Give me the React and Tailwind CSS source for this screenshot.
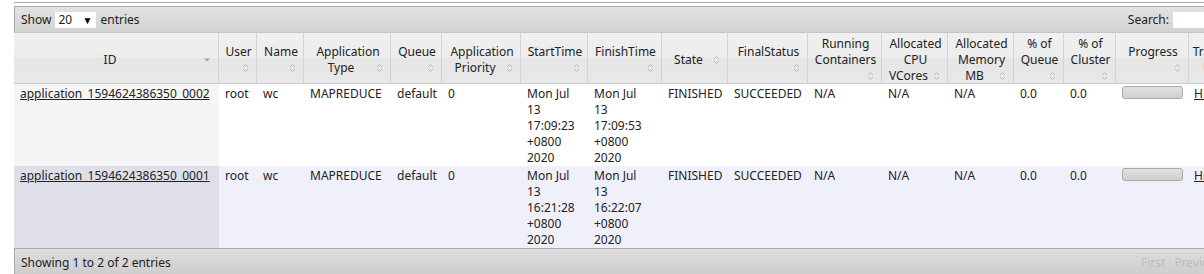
import React from "react";

const columns = [
  { label: "ID", w: "w-[205px]", sorted: true },
  { label: "User", w: "w-[38px]" },
  { label: "Name", w: "w-[47px]" },
  { label: "Application Type", w: "w-[87px]" },
  { label: "Queue", w: "w-[51px]" },
  { label: "Application Priority", w: "w-[79px]" },
  { label: "StartTime", w: "w-[67px]" },
  { label: "FinishTime", w: "w-[74px]" },
  { label: "State", w: "w-[66px]" },
  { label: "FinalStatus", w: "w-[80px]" },
  { label: "Running Containers", w: "w-[74px]" },
  { label: "Allocated CPU VCores", w: "w-[66px]" },
  { label: "Allocated Memory MB", w: "w-[66px]" },
  { label: "% of Queue", w: "w-[50px]" },
  { label: "% of Cluster", w: "w-[52px]" },
  { label: "Progress", w: "w-[73px]" },
  { label: "Tracking UI", w: "w-[60px]", last: true },
];

const apps = [
  {
    id: "application_1594624386350_0002",
    start: ["Mon Jul", "13", "17:09:23", "+0800", "2020"],
    finish: ["Mon Jul", "13", "17:09:53", "+0800", "2020"],
  },
  {
    id: "application_1594624386350_0001",
    start: ["Mon Jul", "13", "16:21:28", "+0800", "2020"],
    finish: ["Mon Jul", "13", "16:22:07", "+0800", "2020"],
  },
];

const SortIcon = ({ sorted }) => (
  <span className="float-right w-[14px] h-[16px] flex items-center justify-center">
    {sorted ? (
      <svg width="6" height="4" viewBox="0 0 6 4">
        <path d="M0 0.5 L6 0.5 L3 3.5 Z" fill="#a8a8a8" />
      </svg>
    ) : (
      <svg width="7" height="10" viewBox="0 0 7 10">
        <polyline points="1,4 3.5,1.5 6,4" fill="none" stroke="#b8b8b8" strokeWidth="1" />
        <polyline points="1,6 3.5,8.5 6,6" fill="none" stroke="#b8b8b8" strokeWidth="1" />
      </svg>
    )}
  </span>
);

const Lines = ({ items }) => (
  <>
    {items.map((t, i) => (
      <div key={i}>{t}</div>
    ))}
  </>
);

export default function App() {
  return (
    <div className="w-[1204px] h-[274px] overflow-hidden bg-white text-[12px] leading-[16px] text-[#222] font-['Noto_Sans',sans-serif]">
      <div className="h-[2px]" />
      <div className="ml-[14px] h-px bg-[#a9a9a9]" />
      <div className="h-[3px]" />

      <div className="ml-[14px] w-[1246px]">
        {/* toolbar */}
        <div className="h-[26px] border-t border-l border-[#aaa] bg-[linear-gradient(#e2e2e2,#d2d2d2)] flex items-center justify-between pl-[6px] pr-[6px]">
          <div className="flex items-center gap-[4px]">
            <span>Show</span>
            <span className="w-[41px] h-[16px] bg-white flex items-center justify-between pl-[3px] pr-[4px]">
              <span>20</span>
              <span className="text-[10px] text-black">▼</span>
            </span>
            <span>entries</span>
          </div>
          <div className="flex items-center gap-[4px]">
            <span>Search:</span>
            <span className="w-[81px] h-[16px] bg-white" />
          </div>
        </div>

        <table className="table-fixed w-[1235px] border-separate border-spacing-0">
          <colgroup>
            {columns.map((c) => (
              <col key={c.label} className={c.w} />
            ))}
          </colgroup>
          <thead>
            <tr>
              {columns.map((c) => (
                <th
                  key={c.label}
                  className={`h-[52px] font-normal text-center align-middle pr-[4px] py-0 border-t border-b border-r border-t-[#c4c4c4] border-b-[#c9c9c9] border-r-[#d3d3d3] bg-[linear-gradient(#f0f0f0_0%,#ececec_50%,#e6e6e6_51%,#e8e8e8_100%)] ${c.last ? "pl-0" : "pl-[6px]"}`}
                >
                  <div className="translate-y-[2px]">
                    {c.label}
                    <SortIcon sorted={c.sorted} />
                  </div>
                </th>
              ))}
            </tr>
          </thead>
          <tbody>
            {apps.map((a, i) => {
              const even = i % 2 === 1;
              const rowBg = even ? "bg-[#f0f0fb]" : "bg-white";
              const idBg = even ? "bg-[#dfdfe9]" : "bg-[#f5f5f5]";
              const td = `align-top pl-[6px] pr-[4px] pt-[2px] pb-0 h-[82px] ${rowBg}`;
              return (
                <tr key={a.id}>
                  <td className={`align-top pl-[6px] pr-0 pt-[2px] pb-0 h-[82px] whitespace-nowrap ${idBg}`}>
                    <a href="#" className="underline">{a.id}</a>
                  </td>
                  <td className={td}>root</td>
                  <td className={td}>wc</td>
                  <td className={td}>MAPREDUCE</td>
                  <td className={td}>default</td>
                  <td className={td}>0</td>
                  <td className={td}><Lines items={a.start} /></td>
                  <td className={td}><Lines items={a.finish} /></td>
                  <td className={td}>FINISHED</td>
                  <td className={td}>SUCCEEDED</td>
                  <td className={td}>N/A</td>
                  <td className={td}>N/A</td>
                  <td className={td}>N/A</td>
                  <td className={td}>0.0</td>
                  <td className={td}>0.0</td>
                  <td className={td}>
                    <div className="w-[61px] h-[13px] rounded-[3px] border border-[#a9a9a9] bg-[linear-gradient(#e2e2e2,#cfcfcf)]" />
                  </td>
                  <td className={`align-top pl-[5px] pr-[4px] pt-[2px] pb-0 h-[82px] ${rowBg}`}>
                    <a href="#" className="underline">History</a>
                  </td>
                </tr>
              );
            })}
          </tbody>
        </table>

        {/* footer */}
        <div className="h-[28px] border-t border-l border-[#aaa] bg-[linear-gradient(#dedede,#cccccc)] flex items-center pl-[6px]">
          <div className="w-[1118px]">Showing 1 to 2 of 2 entries</div>
          <div className="flex text-[#bdbdbd] -ml-[3px]">
            <span className="h-[20px] px-[4px] flex items-center border border-[#d2d2d2]">First</span>
            <span className="h-[20px] px-[4px] flex items-center border border-l-0 border-[#d2d2d2]">Previous</span>
            <span className="h-[20px] px-[6px] flex items-center border border-l-0 border-[#d2d2d2]">1</span>
          </div>
        </div>
      </div>
    </div>
  );
}
